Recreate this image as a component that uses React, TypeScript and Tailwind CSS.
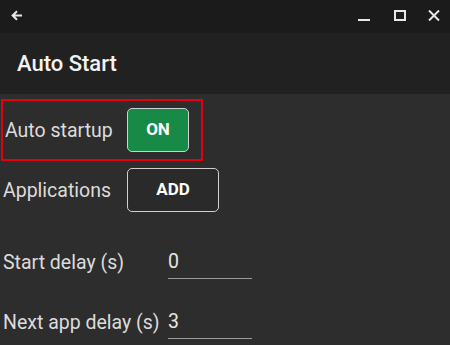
export default function App() {
  return (
    <div className="w-[450px] h-[345px] overflow-hidden bg-[#2d2d2d] text-[#dcdcdc]" style={{ fontFamily: "Roboto, 'Liberation Sans', sans-serif" }}>
      {/* Title bar */}
      <div className="h-[33px] bg-[#1b1b1b] flex items-center relative">
        <svg className="absolute left-[11px] top-[10px]" width="12" height="11" viewBox="0 0 12 11" fill="none" stroke="#e8e8e8" strokeWidth="2">
          <path d="M11 5.5H2M6 1.2L1.6 5.5L6 9.8" />
        </svg>
        <div className="absolute left-[358px] top-[19px] w-[12px] h-[2px] bg-[#e8e8e8]" />
        <div className="absolute left-[394px] top-[10px] w-[12px] h-[11px] border-2 border-[#e8e8e8]" />
        <svg className="absolute left-[428px] top-[10px]" width="12" height="11" viewBox="0 0 12 11" fill="none" stroke="#e8e8e8" strokeWidth="2">
          <path d="M1 0.5L11 10.5M11 0.5L1 10.5" />
        </svg>
      </div>

      {/* Header */}
      <div className="h-[61px] bg-[#212121] flex items-center pl-[17px]">
        <span className="text-[22px] font-medium text-[#f2f2f2]">Auto Start</span>
      </div>

      {/* Auto startup row */}
      <div className="mt-[5px] ml-[1px] w-[202px] h-[62px] border-2 border-[#e3000f] flex items-center pl-[2px]">
        <span className="text-[19.5px] w-[122px] mt-[2px]">Auto startup</span>
        <button className="w-[62px] h-[44px] rounded-[5px] border-[1.5px] border-[#d0d0d0] bg-[#178a47] text-white text-[17px] font-bold">
          ON
        </button>
      </div>

      {/* Applications row */}
      <div className="mt-[7px] flex items-center pl-[3px]">
        <span className="text-[19.5px] w-[124px] mt-[2px]">Applications</span>
        <button className="w-[92px] h-[44px] rounded-[5px] border-[1.5px] border-[#d0d0d0] bg-[#2a2a2a] text-white text-[17px] font-bold">
          ADD
        </button>
      </div>

      {/* Start delay row */}
      <div className="mt-[37px] flex items-end pl-[3px]">
        <span className="text-[19.5px] w-[165px] leading-[26px] pb-[3px]">Start delay (s)</span>
        <div className="w-[84px] border-b border-[#9a9a9a] text-[19.5px] leading-[26px] text-[#e6e6e6] pb-[3px]">0</div>
      </div>

      {/* Next app delay row */}
      <div className="mt-[30px] flex items-end pl-[3px]">
        <span className="text-[19.5px] w-[165px] leading-[26px] pb-[3px]">Next app delay (s)</span>
        <div className="w-[84px] border-b border-[#9a9a9a] text-[19.5px] leading-[26px] text-[#e6e6e6] pb-[3px]">3</div>
      </div>
    </div>
  );
}
